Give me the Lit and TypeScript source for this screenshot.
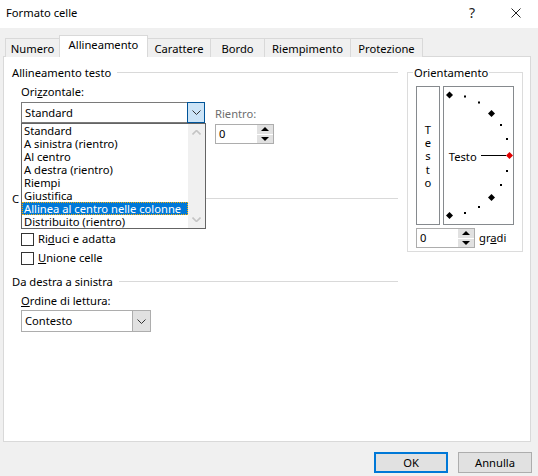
import { LitElement, html, css, svg } from 'lit'
import { customElement } from 'lit/decorators.js'

const TABS = [
  ['Numero', 55],
  ['Allineamento', 89],
  ['Carattere', 63],
  ['Bordo', 54],
  ['Riempimento', 86],
  ['Protezione', 72],
] as const

const OPTIONS = [
  'Standard',
  'A sinistra (rientro)',
  'Al centro',
  'A destra (rientro)',
  'Riempi',
  'Giustifica',
  'Allinea al centro nelle colonne',
  'Distribuito (rientro)',
]

// dial marks, coordinates relative to the dial box
const BIG = [[6.5, 9], [48.5, 27.5], [48.5, 111.5], [6.5, 129.5]]
const SMALL = [[22, 10.5], [36, 16.5], [58, 39], [64, 53], [64, 85], [58, 99], [36, 121], [22, 127]]

const diamond = (x: number, y: number, r: number, fill: string) =>
  svg`<path d="M${x} ${y - r}L${x + r} ${y}L${x} ${y + r}L${x - r} ${y}Z" fill=${fill}></path>`

const chevron = html`<svg width="9" height="5" viewBox="0 0 9 5"><path d="M.5 .5L4.5 4.5L8.5 .5" fill="none" stroke="#333" stroke-width="1"></path></svg>`

@customElement('app-root')
export class AppRoot extends LitElement {
  static styles = css`
    :host {
      display: block;
      width: 538px;
      height: 476px;
      font: 11.2px/14px "Noto Sans", sans-serif;
      color: #000;
      background: #f0f0f0;
      overflow: hidden;
    }
    u { text-underline-offset: 1px; }

    .title {
      height: 28px;
      background: #fff;
      display: flex;
      align-items: center;
      padding: 0 17px 2px 6px;
      box-sizing: border-box;
    }
    .title .name { flex: 1; }
    .help { font-size: 14px; color: #222; margin-right: 36px; }

    .tabs {
      display: flex;
      align-items: flex-end;
      height: 22px;
      margin: 7px 0 0 5px;
      position: relative;
      z-index: 1;
    }
    .tab {
      height: 19px;
      box-sizing: border-box;
      border: 1px solid #d9d9d9;
      border-left: none;
      border-bottom: none;
      text-align: center;
      line-height: 20px;
      background: #f0f0f0;
    }
    .tab:first-child { border-left: 1px solid #d9d9d9; }
    .tab.on {
      height: 22px;
      background: #fff;
      border-left: 1px solid #d9d9d9;
      line-height: 18px;
      margin-left: -1px;
    }

    .panel {
      position: relative;
      width: 528px;
      height: 386px;
      margin: -1px 0 0 3px;
      box-sizing: border-box;
      background: #fff;
      border: 1px solid #d9d9d9;
      padding: 9px 7px 0 8px;
      display: flex;
      gap: 9px;
    }
    .left { width: 386px; flex: none; }

    .head { display: flex; align-items: center; gap: 6px; }
    .head::after { content: ""; flex: 1; border-top: 1px solid #d9d9d9; margin-top: -2px; }
    .indent { padding-left: 9px; }
    .label { margin-top: 5px; }

    .combo-row { display: flex; gap: 10px; margin-top: 3px; height: 90px; }
    .combo {
      box-sizing: border-box;
      height: 22px;
      border: 1px solid #7a7a7a;
      display: flex;
      align-items: center;
      padding-left: 3px;
      background: #fff;
    }
    .combo .val { flex: 1; }
    .combo .btn {
      box-sizing: border-box;
      width: 18px;
      height: 100%;
      display: flex;
      align-items: center;
      justify-content: center;
      background: #e1e1e1;
      border-left: 1px solid #adadad;
    }
    .combo.h-open { width: 184px; height: 21px; }
    .combo.h-open .btn {
      width: 18px;
      height: 21px;
      margin-right: -1px;
      background: #cce4f7;
      border: 1px solid #005499;
    }
    .combo.read { width: 130px; border-color: #adadad; margin-top: 2px; }

    .rientro { padding-top: 5px; color: #6d6d6d; }
    .spin {
      box-sizing: border-box;
      width: 59px;
      height: 20px;
      border: 1px solid #adadad;
      display: flex;
      align-items: center;
      padding-left: 3px;
      background: #fff;
      color: #000;
    }
    .rientro .spin { margin-top: 3px; }
    .spin .val { flex: 1; }
    .arrows {
      width: 16px;
      height: 18px;
      display: flex;
      flex-direction: column;
      gap: 1px;
      background: #fff;
    }
    .arrows span {
      flex: 1;
      background: #e1e1e1;
      display: flex;
      align-items: center;
      justify-content: center;
    }
    .tri-up { width: 0; height: 0; border: 4px solid transparent; border-top: none; border-bottom: 4px solid #000; }
    .tri-down { width: 0; height: 0; border: 4px solid transparent; border-bottom: none; border-top: 4px solid #000; }

    .checks { display: flex; flex-direction: column; gap: 5px; margin-top: 7px; }
    .check { display: flex; align-items: center; gap: 4px; height: 14px; }
    .box { width: 13px; height: 13px; box-sizing: border-box; border: 1px solid #333; background: #fff; }

    .sec-rtl { margin-top: 10px; }

    /* open dropdown lies over the controls below the combo */
    .list {
      position: absolute;
      left: 17px;
      top: 66px;
      width: 185px;
      height: 106px;
      box-sizing: border-box;
      border: 1px solid #646464;
      background: #fff;
      z-index: 2;
      display: flex;
    }
    .opts { flex: 1; min-width: 0; }
    .opt { height: 13px; line-height: 13px; padding-left: 2px; white-space: nowrap; }
    .opt.sel { background: #0078d7; color: #fff; outline: 1px dotted #ffb000; outline-offset: -1px; }
    .scroll {
      width: 17px;
      background: #f0f0f0;
      display: flex;
      flex-direction: column;
      justify-content: space-between;
      align-items: center;
      padding: 6px 0;
      box-sizing: border-box;
    }

    .orient {
      position: relative;
      width: 116px;
      height: 180px;
      margin-top: 6px;
      box-sizing: border-box;
      border: 1px solid #dcdcdc;
      padding: 13px 8px 0;
    }
    .orient .legend {
      position: absolute;
      left: 5px;
      top: -7px;
      padding: 0 1px;
      background: #fff;
    }
    .faces { display: flex; gap: 3px; height: 139px; }
    .vert {
      width: 24px;
      box-sizing: border-box;
      border: 1px solid #868a8e;
      padding-top: 1px;
      display: flex;
      flex-direction: column;
      align-items: center;
      justify-content: center;
      line-height: 13.3px;
    }
    .dial {
      position: relative;
      width: 72px;
      box-sizing: border-box;
      border: 1px solid #868a8e;
    }
    .dial svg { position: absolute; left: -1px; top: -1px; }
    .dial .word { position: absolute; left: 5px; top: 63px; }
    .deg { display: flex; align-items: center; gap: 4px; margin-top: 3px; }

    .foot {
      display: flex;
      justify-content: flex-end;
      gap: 10px;
      padding: 10px 6px 0 0;
    }
    .foot button {
      box-sizing: border-box;
      width: 74px;
      height: 21px;
      font: inherit;
      color: #000;
      background: #e1e1e1;
      border: 1px solid #adadad;
      padding: 0;
    }
    .foot button.def { border: 2px solid #0078d7; }
  `

  private arrows() {
    return html`<div class="arrows"><span><i class="tri-up"></i></span><span><i class="tri-down"></i></span></div>`
  }

  render() {
    return html`
      <div class="title">
        <span class="name">Formato celle</span>
        <span class="help">?</span>
        <svg width="10" height="10" viewBox="0 0 10 10"><path d="M.5 .5L9.5 9.5M9.5 .5L.5 9.5" stroke="#222" stroke-width="1"></path></svg>
      </div>

      <div class="tabs">
        ${TABS.map(([name, w]) => html`
          <div class="tab ${name === 'Allineamento' ? 'on' : ''}" style="width:${w}px">${name}</div>
        `)}
      </div>

      <div class="panel">
        <div class="left">
          <div class="head">Allineamento testo</div>
          <div class="indent">
            <div class="label">Ori<u>z</u>zontale:</div>
            <div class="combo-row">
              <div class="combo h-open">
                <span class="val">Standard</span>
                <span class="btn">${chevron}</span>
              </div>
              <div class="rientro">
                <div>Rientro:</div>
                <div class="spin"><span class="val">0</span>${this.arrows()}</div>
              </div>
            </div>
          </div>

          <div class="head">C</div>
          <div class="indent checks">
            <div class="check"></div>
            <div class="check"><span class="box"></span><span>Ri<u>d</u>uci e adatta</span></div>
            <div class="check"><span class="box"></span><span><u>U</u>nione celle</span></div>
          </div>

          <div class="head sec-rtl">Da destra a sinistra</div>
          <div class="indent">
            <div class="label"><u>O</u>rdine di lettura:</div>
            <div class="combo read">
              <span class="val">Contesto</span>
              <span class="btn">${chevron}</span>
            </div>
          </div>
        </div>

        <div class="orient">
          <span class="legend">Orientamento</span>
          <div class="faces">
            <div class="vert">${[...'Testo'].map((c) => html`<span>${c}</span>`)}</div>
            <div class="dial">
              <svg width="72" height="139" viewBox="0 0 72 139">
                ${BIG.map(([x, y]) => diamond(x, y, 3.5, '#000'))}
                ${SMALL.map(([x, y]) => svg`<rect x=${x - 1} y=${y - 1} width="2" height="2" fill="#000"></rect>`)}
                <rect x="38" y="69" width="25" height="1" fill="#000"></rect>
                ${diamond(66.5, 69.5, 3.5, '#e00000')}
              </svg>
              <span class="word">Testo</span>
            </div>
          </div>
          <div class="deg">
            <div class="spin"><span class="val">0</span>${this.arrows()}</div>
            <span>gr<u>a</u>di</span>
          </div>
        </div>

        <div class="list">
          <div class="opts">
            ${OPTIONS.map((o, i) => html`<div class="opt ${i === 6 ? 'sel' : ''}">${o}</div>`)}
          </div>
          <div class="scroll">
            <svg width="9" height="5" viewBox="0 0 9 5"><path d="M.5 4.5L4.5 .5L8.5 4.5" fill="none" stroke="#c4c4c4" stroke-width="1.6"></path></svg>
            <svg width="9" height="5" viewBox="0 0 9 5"><path d="M.5 .5L4.5 4.5L8.5 .5" fill="none" stroke="#c4c4c4" stroke-width="1.6"></path></svg>
          </div>
        </div>
      </div>

      <div class="foot">
        <button class="def">OK</button>
        <button>Annulla</button>
      </div>
    `
  }
}
